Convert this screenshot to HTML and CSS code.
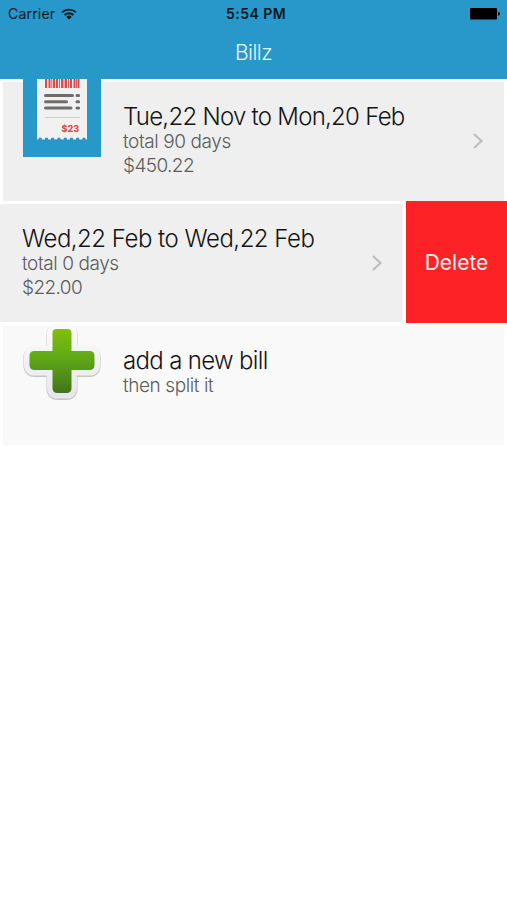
FILE: index.html
```html
<!DOCTYPE html>
<html lang="en">
<head>
  <meta charset="UTF-8">
  <meta name="viewport" content="width=device-width, initial-scale=1.0">
  <title>Billz</title>
  <link rel="stylesheet" href="styles.css">
</head>
<body>
  <header class="top">
    <div class="status-bar">
      <div class="carrier">
        <span>Carrier</span>
        <svg class="wifi" width="16" height="12" viewBox="0 0 16 12">
          <path d="M1.2 4.4a9.8 9.8 0 0 1 13.6 0M3.6 7a6.3 6.3 0 0 1 8.8 0" fill="none" stroke="#041822" stroke-width="1.9"/>
          <path d="M8 11.6L5.3 8.9a3.9 3.9 0 0 1 5.4 0z" fill="#041822"/>
        </svg>
      </div>
      <div class="time">5:54 PM</div>
      <div class="battery">
        <svg width="30" height="12" viewBox="0 0 30 12">
          <rect x="0" y="0" width="27" height="11.5" rx="1" fill="#000"/>
          <path d="M28 3.8q2 .5 2 2t-2 2z" fill="#000"/>
        </svg>
      </div>
    </div>
    <h1>Billz</h1>
  </header>

  <main class="bills">
    <div class="row">
      <div class="card">
        <!-- receipt -->
        <svg class="receipt" width="78" height="78" viewBox="0 0 78 78">
          <rect width="78" height="78" fill="#2897ca"/>
          <path d="M14 0h50v60.5H14z" fill="#f1f1f1"/>
          <!-- torn edge -->
          <path d="M17.2 60.4h46" stroke="#2897ca" stroke-width="3.6" stroke-linecap="round" stroke-dasharray="0 6.25"/>
          <path d="M23 0v9M26.5 0v9M31 0v9M34 0v9M39 0v9M43 0v9M48 0v9M51.5 0v9M55.5 0v9" stroke="#e04a48" stroke-width="2"/>
          <path d="M28.8 0v9M36.5 0v9M41 0v9M45.5 0v9M53.5 0v9" stroke="#e04a48" stroke-width=".9"/>
          <path d="M22.5 16.5h27M22.5 22.8h21M22.5 29h25.5M54 16.5h1.6M54 22.8h1.6M54 29h1.6" stroke="#6f6d6c" stroke-width="3" stroke-linecap="round"/>
          <path d="M22 38.5h35" stroke="#d0d0d0" stroke-width="1"/>
          <text class="price" x="38.5" y="52.5">$23</text>
        </svg>
        <div class="info">
          <h2 class="t1">Tue,22 Nov to Mon,20 Feb</h2>
          <p class="d1">total 90 days</p>
          <p class="a1">$450.22</p>
        </div>
        <svg class="chevron" width="12" height="18" viewBox="0 0 12 18">
          <path d="M2 2l7.5 7L2 16" fill="none" stroke="#bebebe" stroke-width="2.2"/>
        </svg>
      </div>
    </div>

    <div class="row swiped">
      <div class="card">
        <div class="info">
          <h2 class="t2">Wed,22 Feb to Wed,22 Feb</h2>
          <p class="d2">total 0 days</p>
          <p class="a2">$22.00</p>
        </div>
        <svg class="chevron" width="12" height="18" viewBox="0 0 12 18">
          <path d="M2 2l7.5 7L2 16" fill="none" stroke="#bebebe" stroke-width="2.2"/>
        </svg>
      </div>
      <button class="delete">Delete</button>
    </div>

    <div class="row add">
      <div class="card">
        <svg class="plus" width="78" height="76" viewBox="0 0 78 76">
          <defs>
            <linearGradient id="green" x1="0" y1="0" x2="0" y2="1">
              <stop offset="0" stop-color="#82bf0b"/>
              <stop offset=".45" stop-color="#60a817"/>
              <stop offset="1" stop-color="#42751a"/>
            </linearGradient>
            <linearGradient id="rim" x1="0" y1="0" x2="0" y2="1">
              <stop offset="0" stop-color="#fbfbfb"/>
              <stop offset="1" stop-color="#e8e8ec"/>
            </linearGradient>
            <!-- one outline, stroked for the rim and filled for the cross -->
            <path id="cross" d="M34 2h11q4 0 4 4v18h18q5 0 5 5v9q0 5-5 5H49v18q0 5-5 5H35q-5 0-5-5V43H12q-5 0-5-5v-9q0-5 5-5h18V6q0-4 4-4z"/>
          </defs>
          <g transform="translate(-.5 0)" stroke-linejoin="round">
            <use href="#cross" y="1" fill="none" stroke="#c6c6ca" stroke-width="12"/>
            <use href="#cross" fill="none" stroke="url(#rim)" stroke-width="11"/>
            <use href="#cross" fill="url(#green)"/>
          </g>
        </svg>
        <div class="info">
          <h2 class="t3">add a new bill</h2>
          <p class="d3">then split it</p>
        </div>
      </div>
    </div>
  </main>
</body>
</html>
```
FILE: styles.css
```css
* {
  box-sizing: border-box;
}
body {
  margin: 0;
  background: #fff;
  font-family: Inter, "Liberation Sans", sans-serif;
  color: #141414;
}
.top {
  height: 79px;
  background: #2897ca;
}
.status-bar {
  display: grid;
  grid-template-columns: 1fr auto 1fr;
  align-items: center;
  height: 27px;
  padding: 0 7px 0 8px;
  color: #041822;
  font-size: 14px;
}
.carrier {
  display: flex;
  align-items: center;
  gap: 6px;
  letter-spacing: 0.2px;
}
.wifi {
  display: block;
}
.time {
  font-weight: 600;
  letter-spacing: 0.45px;
  padding-left: 4px;
}
.battery {
  display: flex;
  justify-content: flex-end;
}
h1 {
  margin: 0;
  padding-top: 12px;
  text-align: center;
  color: #e2f5fc;
  font-size: 21px;
  font-weight: 300;
  letter-spacing: -0.5px;
  line-height: 27px;
}
.row {
  display: flex;
  height: 122px;
  padding: 3px 3px 0;
}
.card {
  display: flex;
  align-items: flex-start;
  flex: 1;
  background: #efefef;
}
.info {
  flex: 1;
  padding: 21px 0 0 22px;
  white-space: nowrap;
}
h2 {
  margin: 0;
  font-size: 24px;
  font-weight: 300;
  line-height: 27px;
}
p {
  margin: 0;
  color: #5c5c5c;
  font-size: 19px;
  font-weight: 300;
  line-height: 24px;
}
.t1 {
  letter-spacing: -0.73px;
}
.t2 {
  letter-spacing: -0.5px;
}
.t3 {
  letter-spacing: -0.66px;
}
.d1, .d2, .d3 {
  letter-spacing: -0.42px;
}
.a1, .a2 {
  letter-spacing: -0.6px;
}
.receipt {
  margin: -3px 0 0 20px;
}
.price {
  fill: #e04a48;
  font-size: 9px;
  font-weight: 800;
}
.chevron {
  flex: none;
  margin: 50px 20px 0 0;
}
.swiped {
  padding: 0;
}
.swiped .card {
  height: 118px;
  margin: 3px 3px 0 0;
}
.delete {
  width: 101px;
  padding: 0;
  border: 0;
  background: #fd2226;
  color: #fff0f0;
  font: 400 21px Inter, sans-serif;
}
.add .card {
  background: #f9f9f9;
}
.plus {
  margin: 1px 0 0 20px;
  overflow: visible;
}
```
